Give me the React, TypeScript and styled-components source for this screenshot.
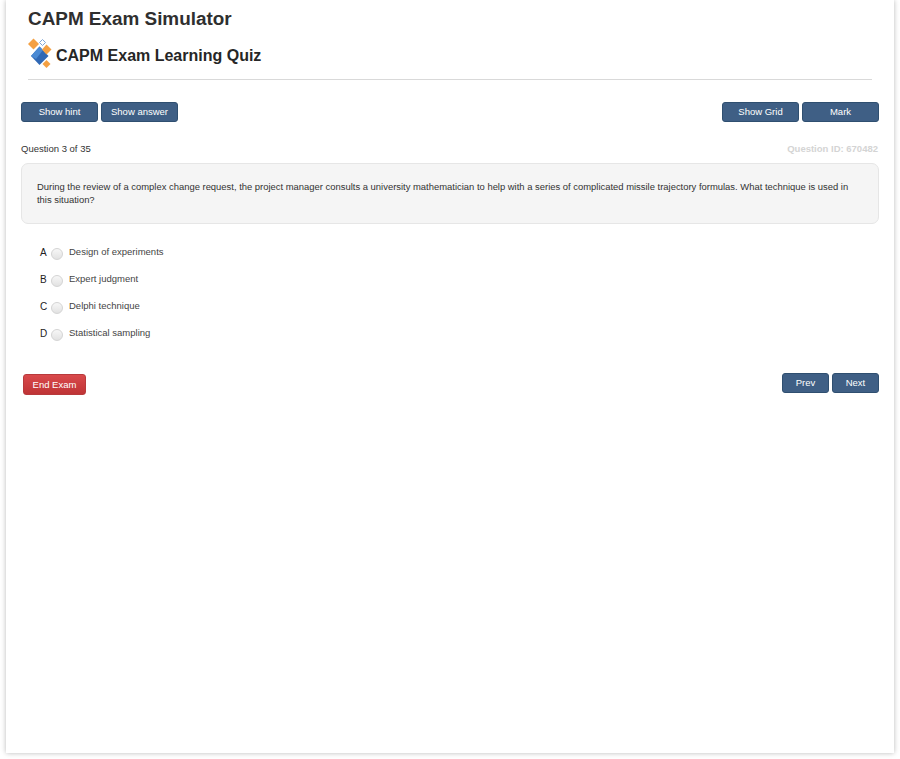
import React from "react";
import styled, { createGlobalStyle } from "styled-components";

const GlobalStyle = createGlobalStyle`
  html, body {
    margin: 0;
    padding: 0;
    min-height: 100vh;
    background: #ffffff;
  }
`;

// White sheet with a soft shadow on the sides and bottom
const Page = styled.div`
  box-sizing: border-box;
  position: relative;
  width: 888px;
  height: 753px;
  margin: 0 0 6px 6px;
  padding: 0 15px 0 15px;
  background: #fff;
  box-shadow: 0 0 5px rgba(0, 0, 0, 0.28);
  font-family: "Liberation Sans", Arial, sans-serif;
  color: #333;
`;

const Header = styled.div`
  margin: 0 7px 0 7px;
  padding: 7px 0 0 0;
  height: 72px;
  border-bottom: 1px solid #d9d9d9;
`;

const SiteTitle = styled.h1`
  margin: 0;
  font-size: 18.9px;
  line-height: 24px;
  font-weight: 700;
  color: #2f2f2f;
`;

const QuizTitle = styled.div`
  display: flex;
  align-items: center;
  gap: 4px;
  margin-top: 7px;
  font-size: 16px;
  line-height: 24px;
  font-weight: 700;
  color: #262626;
`;

const QuizName = styled.span`
  padding-top: 6px;
`;

const Toolbar = styled.div<{ $top: number }>`
  display: flex;
  justify-content: space-between;
  align-items: flex-start;
  margin-top: ${({ $top }) => $top}px;
`;

const ButtonGroup = styled.div`
  display: flex;
  gap: 3px;
`;

const Button = styled.button<{ $wide?: boolean }>`
  box-sizing: border-box;
  width: ${({ $wide }) => ($wide ? 77 : 47)}px;
  height: 20px;
  padding: 0;
  border: 1px solid #2f4f70;
  border-radius: 3px;
  background: #3f5f85;
  color: #fff;
  font-family: inherit;
  font-size: 9.5px;
  line-height: 18px;
  text-align: center;
`;

const EndButton = styled.button`
  box-sizing: border-box;
  width: 63px;
  height: 21px;
  margin: 1px 0 0 2px;
  padding: 0;
  border: 1px solid #b83a3c;
  border-radius: 3px;
  background: linear-gradient(#d9494b, #bf3436);
  color: #fff;
  font-family: inherit;
  font-size: 9.5px;
  line-height: 18px;
`;

const InfoRow = styled.div`
  display: flex;
  justify-content: space-between;
  margin-top: 21px;
  font-size: 9.5px;
  line-height: 12px;
`;

const QuestionId = styled.span`
  margin-right: 1px;
  font-weight: 700;
  color: #d4d4d4;
`;

const QuestionBox = styled.div`
  box-sizing: border-box;
  height: 61px;
  margin-top: 8px;
  padding: 16px 15px 0;
  background: #f5f5f5;
  border: 1px solid #e6e6e6;
  border-radius: 7px;
  font-size: 9.44px;
  line-height: 13px;
  color: #333;
`;

const Options = styled.div`
  margin: 14px 0 0 19px;
`;

const Option = styled.div`
  display: flex;
  align-items: center;
  height: 27px;
  font-size: 9.5px;
`;

const OptionLetter = styled.span`
  width: 11px;
  margin-top: 2px;
  font-size: 10px;
  font-weight: 400;
  color: #222;
`;

const Radio = styled.span`
  box-sizing: border-box;
  flex: none;
  width: 12px;
  height: 12px;
  margin: 4px 6px 0 0;
  border: 1px solid #d4d4d4;
  border-radius: 50%;
  background: linear-gradient(#f7f7f7, #e2e2e2);
`;

const OptionText = styled.span`
  color: #444;
`;

const Logo = () => (
  <svg width="24" height="30" viewBox="0 0 24 30" aria-hidden="true">
    <path d="M5.5 0.5 L11 6 L5.5 11.5 L0 6 Z" fill="#f4a043" />
    <path d="M14.5 1.5 L17.5 4.5 L14.5 7.5 L11.5 4.5 Z" fill="#fff" stroke="#7fa6d6" />
    <path d="M11.5 8.5 L20.5 18 L11.5 27 L3 18 Z" fill="#2f68b5" />
    <path d="M11.5 8.5 L15 12 L8 21 L3 18 Z" fill="#4a8ad4" />
    <path d="M18.5 6.5 L23.5 11.5 L18.5 16.5 L14 11.5 Z" fill="#f4a043" />
    <path d="M18.5 22 L22.5 26 L18.5 30 L14.5 26 Z" fill="#f4a043" />
  </svg>
);

const options = [
  { letter: "A", text: "Design of experiments" },
  { letter: "B", text: "Expert judgment" },
  { letter: "C", text: "Delphi technique" },
  { letter: "D", text: "Statistical sampling" },
];

export default function App() {
  return (
    <Page>
      <GlobalStyle />
      <Header>
        <SiteTitle>CAPM Exam Simulator</SiteTitle>
        <QuizTitle>
          <Logo />
          <QuizName>CAPM Exam Learning Quiz</QuizName>
        </QuizTitle>
      </Header>

      <Toolbar $top={22}>
        <ButtonGroup>
          <Button $wide>Show hint</Button>
          <Button $wide>Show answer</Button>
        </ButtonGroup>
        <ButtonGroup>
          <Button $wide>Show Grid</Button>
          <Button $wide>Mark</Button>
        </ButtonGroup>
      </Toolbar>

      <InfoRow>
        <span>Question 3 of 35</span>
        <QuestionId>Question ID: 670482</QuestionId>
      </InfoRow>

      <QuestionBox>
        During the review of a complex change request, the project manager consults a university
        mathematician to help with a series of complicated missile trajectory formulas. What
        technique is used in this situation?
      </QuestionBox>

      <Options>
        {options.map((o) => (
          <Option key={o.letter}>
            <OptionLetter>{o.letter}</OptionLetter>
            <Radio />
            <OptionText>{o.text}</OptionText>
          </Option>
        ))}
      </Options>

      <Toolbar $top={27}>
        <EndButton>End Exam</EndButton>
        <ButtonGroup>
          <Button>Prev</Button>
          <Button>Next</Button>
        </ButtonGroup>
      </Toolbar>
    </Page>
  );
}
